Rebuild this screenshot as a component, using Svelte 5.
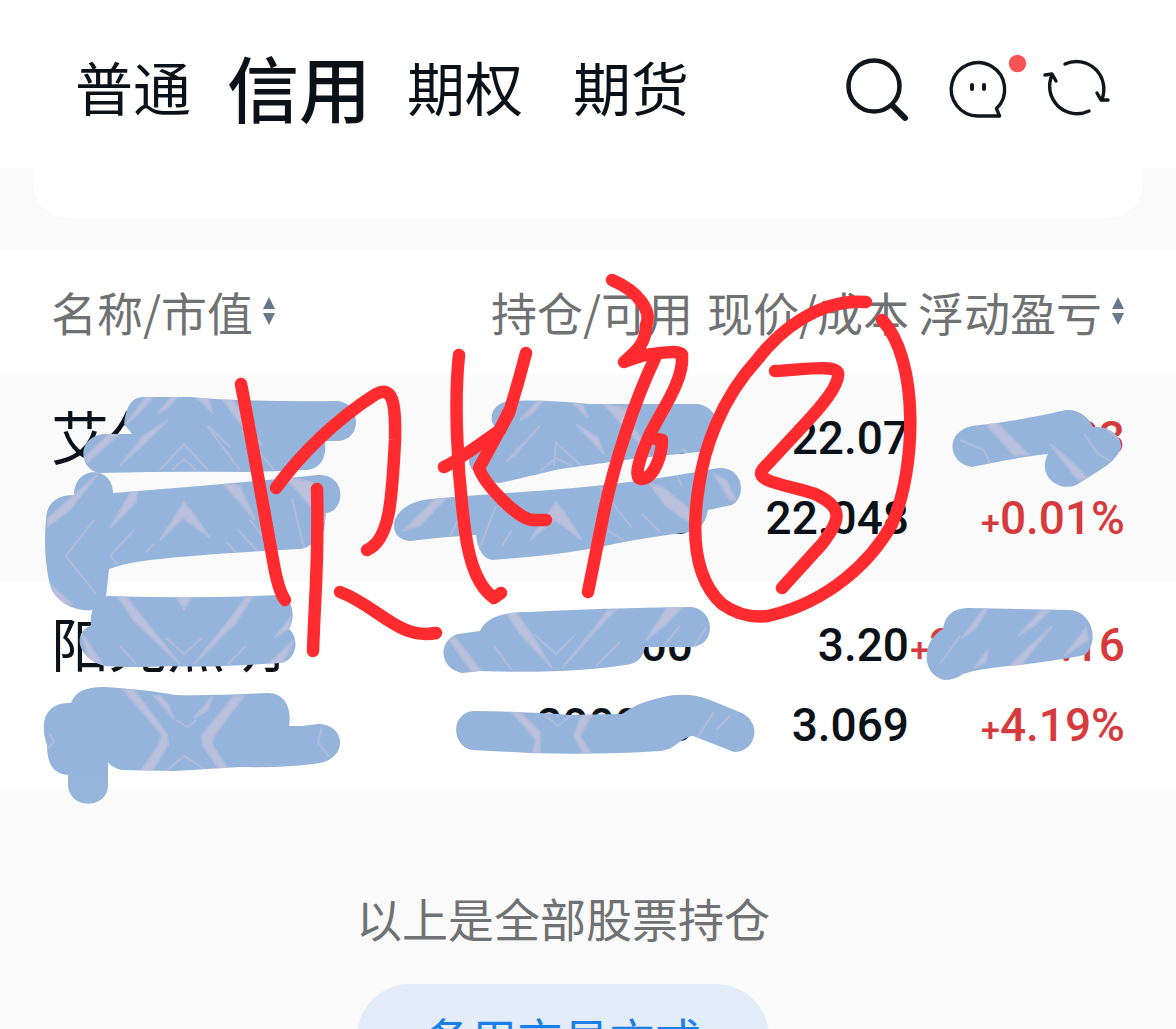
<script lang="ts">
  // Credit account holdings: account tabs, positions table and the pen marks drawn over it.

  interface Holding {
    name: string;
    held: string;
    usable: string;
    price: string;
    cost: string;
    profit: string;
    rate: string;
  }

  const tabs = ['普通', '信用', '期权', '期货'];
  let activeTab = $state('信用');

  const holdings: Holding[] = [
    { name: '艾尔眼科', held: '00', usable: '000', price: '22.07', cost: '22.048', profit: '0.23', rate: '0.01%' },
    { name: '阳光照明', held: '2000', usable: '200000', price: '3.20', cost: '3.069', profit: '26221.16', rate: '4.19%' },
  ];

  // Brush patches
  const patches = [
    'M143 397L190 397Q240 402 338 401C362 404 362 440 338 441L325 441C327 458 320 470 305 470Q280 471 250 472Q170 471 100 473C78 470 76 436 105 434L132 434L124 424C126 406 132 397 143 397Z',
    'M113 493L150 490Q230 484 318 475C348 474 345 512 326 513L324 530Q312 548 300 549Q200 554 150 560Q125 563 109 569L106 597Q102 608 92 610C75 612 55 602 50 585C45 565 44 540 46 520C46 505 55 495 74 495C74 465 113 465 113 493Z',
    'M108 596Q200 599 280 595C293 597 296 618 289 629C300 638 297 661 280 663Q200 668 170 666Q130 668 105 666C80 660 70 635 91 625C90 610 95 598 108 596Z',
    'M71 703C76 690 88 687 105 687Q150 690 175 695Q210 696 268 693C286 693 292 710 289 726L302 726L318 724C346 724 348 758 320 763Q290 768 240 767L175 771L122 770Q112 768 108 762L108 785C108 810 68 810 68 784L68 775C52 774 47 762 47 745C40 725 43 702 71 703Z',
    'M510 401Q540 399 590 404L698 404C722 408 724 440 708 451L640 458L560 469L500 483C482 482 468 470 469 460C475 448 490 442 500 438L492 422C490 410 498 402 510 401Z',
    'M430 499Q490 494 550 490Q640 483 718 468C748 466 746 506 727 506L708 510C706 522 700 530 690 532Q640 538 600 547Q560 555 492 560C484 558 478 552 476 535Q440 537 410 541C386 540 386 504 430 499Z',
    'M462 673C438 668 438 640 458 634L480 631C486 618 500 612 530 612Q600 608 692 607C716 611 716 645 692 647L645 647C642 660 636 664 625 665Q570 674 480 671Z',
    'M474 711Q540 712 570 715L622 714Q635 704 655 699Q685 690 710 700L742 713C764 725 754 753 734 752L693 736C680 737 676 750 660 751Q600 755 530 753L472 750C450 745 451 712 474 711Z',
    'M972 426Q1020 421 1066 410C1078 409 1088 416 1093 427C1112 426 1122 438 1121 448Q1116 461 1100 470L1078 484C1060 494 1036 476 1048 454Q1020 457 972 467C948 464 944 432 972 426Z',
    'M944 680C920 674 922 640 943 629C946 612 956 608 970 608L1070 610C1092 612 1100 640 1085 655Q1060 660 1020 665Q980 668 963 674Q955 680 944 680Z',
  ];

  // Pale bristle marks inside the patches
  const bristles = [
    'M148 394L126 424L140 412L156 394Z', 'M172 396L158 413L168 408L178 396Z', 'M195 396L212 412L208 398Z',
    'M220 396L250 436L262 446L230 396Z', 'M168 420L142 437L122 463L140 448Z', 'M110 433L84 458L88 462L120 433Z',
    'M207 426L240 470M242 430L274 470M140 442L120 466M160 470L184 444L208 470M172 470L184 459L196 470M208 426L230 447',
    'M98 474L48 518L48 526L70 510Z', 'M132 490L110 528L136 502L138 489Z', 'M222 482L255 520L240 486Z',
    'M284 476L330 528L312 482Z', 'M184 502L160 540L183 518L210 538L192 512Z',
    'M94 520L66 556L96 594M134 530L110 556L118 564M238 530L262 556M250 520L278 556M292 498L304 548M146 552L154 544M226 542L240 556',
    'M50 584L58 603L72 604Z', 'M118 597L134 621L180 664L144 619L126 597Z', 'M246 597L230 619L194 664L236 623L252 597Z',
    'M176 597L184 609L192 597Z', 'M166 638L184 654L202 638M120 646L136 664M246 646L228 664', 'M290 618L274 638L290 628Z',
    'M80 630L102 664L90 660Z', 'M294 640L266 666L282 664Z',
    'M122 688L162 735L158 746L140 772L152 771L168 745L167 734L134 690Z', 'M154 696L174 719L168 704L160 696Z', 'M212 696L194 718L208 710Z',
    'M234 696L202 735L203 746L220 770L228 769L212 744L214 736L244 696Z', 'M166 771L184 756L206 770M176 720L188 727L196 720M322 728L318 742L330 758M50 734L54 742L48 748',
    'M538 400L520 420L532 414L544 400Z', 'M570 400L588 418L582 404Z', 'M604 404L650 456L624 408Z', 'M576 424L604 454L598 438Z',
    'M540 426L506 462L516 454L536 430M554 466L556 443L584 468M540 471L556 458L572 466M682 448L696 461',
    'M436 498L404 530L420 526L446 498Z', 'M556 502L530 540L555 520L582 540L564 512Z', 'M650 484L664 504L682 518L700 526L688 508L664 488Z', 'M714 474L730 500L736 500L726 480Z',
    'M458 520L448 540M496 506L478 552M512 530L502 546M598 484L632 528M642 514L660 532M676 474L682 486M604 528L626 542',
    'M506 612L520 634L552 668L530 632L514 610Z', 'M608 610L590 634L562 668L602 624L616 610Z', 'M668 606L646 640L664 626L684 606Z', 'M680 626L662 648M448 638L472 672L482 672L456 638Z',
    'M534 634L556 654L574 636M494 646L512 670M620 642L596 666M706 628L694 646',
    'M510 710L536 740L532 754L540 752L540 732L520 712Z', 'M582 714L574 736L584 754L590 752L580 736L592 714Z', 'M714 712L696 740M730 716L716 730M544 714L558 726L572 714',
    'M986 424L1014 456L1028 454L996 422Z', 'M1050 444L1078 480L1088 478L1070 460Z', 'M960 440L984 450L990 464M1084 434L1098 454L1112 462M1100 424L1122 442',
    'M984 608L962 638L976 628L988 608Z', 'M1040 612L1018 636L1034 626L1050 610Z', 'M1052 626L1028 648L1008 668L1022 664Z', 'M960 636L940 664M988 650L974 668L986 662Z', 'M1086 628L1064 656L1088 640Z',
  ];

  // Red handwriting
  const strokes = [
    'M241 384C250 430 262 500 273 560Q278 590 285 600',
    'M276 488C300 455 335 420 376 394C392 386 396 400 395 440C392 500 390 540 367 550',
    'M317 489C319 560 315 590 313 651',
    'M340 592C378 606 398 640 436 633',
    'M459 355C454 400 457 470 465 530C470 570 482 590 494 598L501 593',
    'M526 353Q518 384 509 413L479 468C484 484 518 519 532 520L546 520',
    'M444 467C456 462 480 444 500 430L508 413',
    'M612 280C640 292 652 312 646 325C646 345 635 352 624 362Q634 358 645 355C665 352 683 350 682 356C684 380 662 410 650 434C642 452 632 478 641 479C654 479 662 455 662 440L656 439',
    'M655 358C635 400 615 460 604 512L588 592',
    'M866 302C820 298 780 330 757 360C720 400 704 450 699 485C690 540 696 580 722 604C736 614 752 618 768 616C830 602 872 560 892 524C916 470 920 360 882 320',
    'M775 371C800 370 836 364 838 373C840 385 820 408 804 425L763 469C752 482 790 485 815 494C845 508 840 520 822 544L782 588',
  ];
</script>

{#snippet sortArrows()}
  <svg class="sort-icon" viewBox="0 0 14 28" aria-hidden="true">
    <path d="M7 0L13 12H1ZM7 28L13 16H1Z" fill="#66788c" />
  </svg>
{/snippet}

<div class="page">
  <header class="top-bar">
    <nav class="tabs" aria-label="账户">
      {#each tabs as tab (tab)}
        <button class="tab" class:active={activeTab === tab} onclick={() => (activeTab = tab)}>{tab}</button>
      {/each}
    </nav>
    <div class="actions">
      <button class="icon-btn" aria-label="搜索">
        <svg viewBox="0 0 72 72">
          <circle cx="32" cy="34" r="25.5" stroke-width="4.5" />
          <path d="M51 54L63 66" stroke-width="6" />
        </svg>
      </button>
      <button class="icon-btn" aria-label="消息">
        <svg viewBox="0 0 72 72">
          <path d="M36 64H57.5L54.5 56.5A26.7 26.7 0 1 0 36 64Z" />
          <path d="M30 33V37M42 33V37" stroke-width="4" />
          <circle cx="75.5" cy="11.5" r="8.7" fill="#f95354" stroke="none" />
        </svg>
      </button>
      <button class="icon-btn" aria-label="刷新">
        <svg viewBox="0 0 72 72">
          <path d="M23 12A27.5 27.5 0 0 1 60 47M55 41L59 48H66M47 59A27.5 27.5 0 0 1 10 23M3 23L10 22L14 29" />
        </svg>
      </button>
    </div>
  </header>

  <div class="card-tail"><div class="card"></div></div>

  <section class="holdings">
    <table>
      <colgroup>
        <col />
        <col class="w-held" />
        <col class="w-price" />
        <col class="w-profit" />
      </colgroup>
      <thead>
        <tr>
          <th class="col-name"><button class="sort">名称/市值{@render sortArrows()}</button></th>
          <th>持仓/可用</th>
          <th>现价/成本</th>
          <th><button class="sort">浮动盈亏{@render sortArrows()}</button></th>
        </tr>
      </thead>
      <tbody>
        {#each holdings as h (h.name)}
          <tr>
            <td class="name">{h.name}</td>
            <td><div>{h.held}</div><div>{h.usable}</div></td>
            <td><div>{h.price}</div><div>{h.cost}</div></td>
            <td class="up">
              <div><span class="sign">+</span>{h.profit}</div>
              <div><span class="sign">+</span>{h.rate}</div>
            </td>
          </tr>
        {/each}
      </tbody>
    </table>

    <svg class="marks" viewBox="0 250 1176 539" aria-hidden="true">
      <clipPath id="patch-area">
        {#each patches as d}<path {d} />{/each}
      </clipPath>
      <g fill="#95b5db">
        {#each patches as d}<path {d} />{/each}
      </g>
      <g class="bristles" clip-path="url(#patch-area)">
        {#each bristles as d}<path {d} fill={d.endsWith('Z') ? '#c9c5dc' : 'none'} />{/each}
      </g>
      <g class="pen">
        {#each strokes as d}<path {d} />{/each}
      </g>
    </svg>
  </section>

  <footer class="bottom">
    <p>以上是全部股票持仓</p>
    <button class="backup">备用交易方式</button>
  </footer>
</div>

<style>
  :global(body) {
    margin: 0;
    background: #fafafa;
  }

  .page {
    height: 100vh;
    overflow: hidden;
    background: #fafafa;
    color: #0b1118;
    font-family: 'Noto Sans CJK SC', sans-serif;
  }

  button {
    border: none;
    padding: 0;
    background: none;
    color: inherit;
    font: inherit;
    cursor: pointer;
  }

  /* Top bar */
  .top-bar {
    display: flex;
    justify-content: space-between;
    align-items: center;
    padding: 36px 62px 28px 75px;
    background: #fff;
  }

  .tabs {
    display: flex;
    align-items: center;
    gap: 50px;
    padding-bottom: 4px;
  }

  .tab {
    font-size: 58px;
    line-height: 100px;
  }

  .tab.active {
    margin: 0 -14px;
    font-size: 72px;
    font-weight: 500;
  }

  .actions {
    display: flex;
    gap: 28px;
  }

  .icon-btn,
  .icon-btn svg {
    display: block;
    width: 72px;
    height: 72px;
    overflow: visible;
  }

  .icon-btn svg {
    fill: none;
    stroke: #11161c;
    stroke-width: 3.4;
    stroke-linecap: round;
    stroke-linejoin: round;
  }

  .card-tail {
    padding: 0 33px 32px;
  }

  .card {
    height: 50px;
    border-radius: 0 0 36px 36px;
    background: #fff;
  }

  /* Positions */
  .holdings {
    position: relative;
    background: #fff;
  }

  table {
    width: 100%;
    table-layout: fixed;
    border-collapse: collapse;
  }

  .w-held {
    width: 218px;
  }

  .w-price {
    width: 216px;
  }

  .w-profit {
    width: 267px;
  }

  th {
    box-sizing: border-box;
    height: 125px;
    padding: 0 0 4px;
    color: #6f7173;
    font-size: 46px;
    font-weight: 400;
    line-height: 64px;
    text-align: right;
    white-space: nowrap;
  }

  th.col-name {
    padding-left: 51px;
    text-align: left;
  }

  th:last-child,
  td:last-child {
    padding-right: 51px;
  }

  .sort {
    display: inline-flex;
    align-items: center;
    gap: 9px;
  }

  .sort-icon {
    width: 14px;
    height: 28px;
  }

  td {
    padding: 23px 0 24px;
    font-family: Roboto, sans-serif;
    font-size: 46px;
    font-weight: 500;
    line-height: 80px;
    text-align: right;
    vertical-align: top;
    white-space: nowrap;
  }

  tbody tr:nth-child(odd) {
    background: #fafafa;
  }

  td.name {
    padding: 20px 0 24px 51px;
    font-family: 'Noto Sans CJK SC', sans-serif;
    font-size: 58px;
    font-weight: 400;
    text-align: left;
  }

  .up {
    color: #d63a3d;
  }

  .sign {
    font-size: 34px;
    line-height: 40px;
  }

  .marks {
    position: absolute;
    inset: 0;
    width: 100%;
    height: 100%;
    overflow: visible;
    pointer-events: none;
  }

  .bristles {
    stroke: #b9bedb;
    stroke-width: 2;
    opacity: 0.75;
  }

  .pen {
    fill: none;
    stroke: #ff2b2e;
    stroke-width: 12.5;
    stroke-linecap: round;
    stroke-linejoin: round;
  }

  /* Bottom */
  .bottom {
    display: flex;
    flex-direction: column;
    align-items: center;
    padding: 96px 50px 0 0;
  }

  .bottom p {
    margin: 0 0 35px;
    color: #6f7173;
    font-size: 46px;
    line-height: 64px;
  }

  .backup {
    padding: 0 68px;
    border-radius: 53px;
    background: #e2edf9;
    color: #1a7fe8;
    font-size: 46px;
    line-height: 106px;
  }
</style>
